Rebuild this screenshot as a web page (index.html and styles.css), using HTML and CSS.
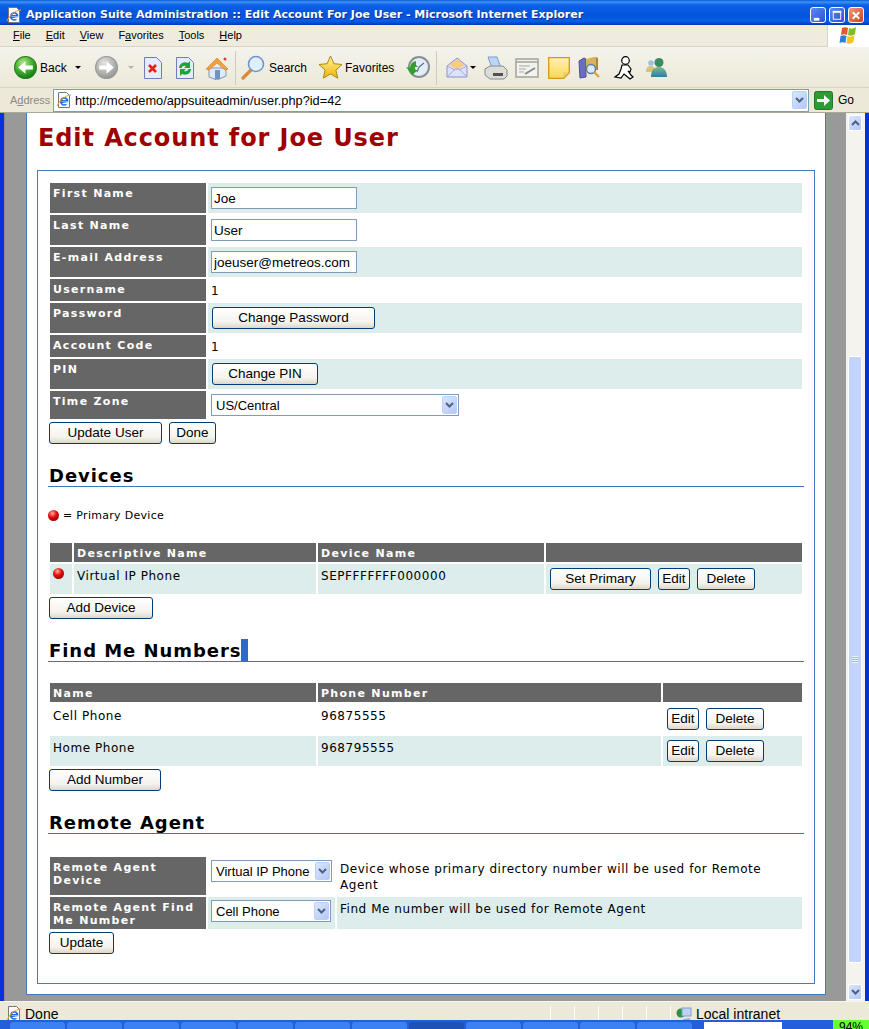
FILE: index.html
```html
<!DOCTYPE html>
<html lang="en">
<head>
  <meta charset="UTF-8">
  <meta name="viewport" content="width=device-width, initial-scale=1.0">
  <title>Application Suite Administration :: Edit Account For Joe User</title>
  <link rel="stylesheet" href="styles.css">
</head>
<body>
  <svg class="defs" aria-hidden="true">
    <defs>
      <radialGradient id="greenBall" cx="40%" cy="30%" r="75%"><stop offset="0" stop-color="#b5ea8c"/><stop offset=".55" stop-color="#3fae2a"/><stop offset="1" stop-color="#0d6f14"/></radialGradient>
      <radialGradient id="greyBall" cx="40%" cy="30%" r="75%"><stop offset="0" stop-color="#e4e4e2"/><stop offset="1" stop-color="#8f908e"/></radialGradient>
      <linearGradient id="star" x1="0" y1="0" x2="0" y2="1"><stop offset="0" stop-color="#fff6a0"/><stop offset="1" stop-color="#f2b300"/></linearGradient>
      <linearGradient id="note" x1="0" y1="0" x2="0" y2="1"><stop offset="0" stop-color="#fff2b0"/><stop offset="1" stop-color="#fbd658"/></linearGradient>
      <linearGradient id="msn" x1="0" y1="0" x2="0" y2="1"><stop offset="0" stop-color="#7fb98f"/><stop offset="1" stop-color="#2c7fa0"/></linearGradient>
      <symbol id="ieIcon" viewBox="0 0 16 16">
        <path d="M2.500.5h8l3 3v12h-11z" fill="#fff" stroke="#777"/>
        <path d="M4 9.500h8.500a4.300 4.300 0 1 0-1.300 3l-2-.6a2.300 2.300 0 0 1-3.100-.9h6.400M6.200 8a2.300 2.300 0 0 1 4.100 0z" fill="#1a6fdc" fill-rule="evenodd"/>
        <path d="M1 14C4 8 9 3.500 15 3" fill="none" stroke="#f0a020"/>
      </symbol>
      <symbol id="arrowDown" viewBox="0 0 9 6"><path d="M1 1l3.500 3.500L8 1" fill="none" stroke="#4d6185" stroke-width="2"/></symbol>
    </defs>
  </svg>

  <div class="window">
    <header class="titlebar">
      <svg class="ie-icon" width="16" height="16"><use href="#ieIcon"/></svg>
      <span class="titlebar-text">Application Suite Administration :: Edit Account For Joe User - Microsoft Internet Explorer</span>
      <div class="window-buttons">
        <span class="win-btn"><svg viewBox="0 0 15 15" width="15" height="15"><rect x="3" y="10" width="6" height="3" fill="#fff"/></svg></span>
        <span class="win-btn"><svg viewBox="0 0 15 15" width="15" height="15"><rect x="3.500" y="3.500" width="8" height="8" fill="none" stroke="#fff"/><rect x="3" y="2.500" width="9" height="2" fill="#fff"/></svg></span>
        <span class="win-btn win-close"><svg viewBox="0 0 15 15" width="15" height="15"><path d="M4 4l7 7M11 4l-7 7" stroke="#fff" stroke-width="2"/></svg></span>
      </div>
    </header>

    <nav class="menubar">
      <span class="menu-item"><u>F</u>ile</span>
      <span class="menu-item"><u>E</u>dit</span>
      <span class="menu-item"><u>V</u>iew</span>
      <span class="menu-item">F<u>a</u>vorites</span>
      <span class="menu-item"><u>T</u>ools</span>
      <span class="menu-item"><u>H</u>elp</span>
      <div class="flag">
        <svg viewBox="0 0 22 19" width="22" height="19"><path d="M4 2c2-1 4-1 6 0l-1 7c-2-1-4-1-6 0z" fill="#e8562a"/><path d="M11 2c2 1 4 1 7-1l-1 7c-3 2-5 2-7 1z" fill="#7fba2c"/><path d="M2.500 10c2-1 4-1 6 0l-1 7c-2-1-4-1-6 0z" fill="#2d7fd6"/><path d="M9.500 10c2 1 4 1 7-1l-1 7c-3 2-5 2-7 1z" fill="#f7c21c"/></svg>
      </div>
    </nav>

    <div class="toolbar">
      <svg class="tool tool-back" viewBox="0 0 22 22" width="23" height="23"><circle cx="11" cy="11" r="10.500" fill="url(#greenBall)" stroke="#2c7f22"/><path d="M18 9h-7V5l-7 6 7 6v-4h7z" fill="#fff"/></svg>
      <span class="tool-label back-label">Back</span>
      <span class="drop-arrow back-arrow"></span>
      <svg class="tool tool-forward" viewBox="0 0 22 22" width="23" height="23"><circle cx="11" cy="11" r="10.500" fill="url(#greyBall)" stroke="#999"/><path d="M4 9h7V5l7 6-7 6v-4H4z" fill="#fff"/></svg>
      <span class="drop-arrow drop-arrow-off forward-arrow"></span>
      <svg class="tool tool-stop" viewBox="0 0 20 24" width="20" height="24"><path d="M1.500 1.500h12l5 5v16h-17z" fill="#e6ecfb" stroke="#6d7fb8"/><path d="M6 9l7 7M13 9l-7 7" stroke="#e8200c" stroke-width="2.600"/></svg>
      <svg class="tool tool-refresh" viewBox="0 0 20 24" width="20" height="24"><path d="M1.500 1.500h12l5 5v16h-17z" fill="#e6ecfb" stroke="#6d7fb8"/><path d="M4 12a6 6 0 0 1 9-5l2-2v7h-6l2-2a3.500 3.500 0 0 0-4.500 2z" fill="#1fa52c"/><path d="M16 13a6 6 0 0 1-9 5l-2 2v-7h6l-2 2a3.500 3.500 0 0 0 4.500-2z" fill="#1fa52c"/></svg>
      <svg class="tool tool-home" viewBox="0 0 24 24" width="24" height="24"><path d="M4 12v9l8 3 9-4v-8z" fill="#dfe9f8" stroke="#7f95b8"/><path d="M1 13L12 2l11 11-3 1-8-7-8 7z" fill="#f2a040" stroke="#c87a20" stroke-width=".6"/><rect x="10" y="14" width="5" height="9" fill="#6f93c9"/><circle cx="20" cy="3" r="1.500" fill="#d8402a"/></svg>
      <span class="tool-sep sep-one"></span>
      <svg class="tool tool-search" viewBox="0 0 25 25" width="25" height="25"><path d="M10 15L2 23" stroke="#d88a3c" stroke-width="3.200" stroke-linecap="round"/><circle cx="15" cy="9" r="7.500" fill="#dff0fc" stroke="#6f97cc" stroke-width="1.600"/></svg>
      <span class="tool-label search-label">Search</span>
      <svg class="tool tool-star" viewBox="0 0 25 25" width="25" height="25"><path d="M12.500 1l3.400 7.700 8.100.8-6.100 5.500 1.800 8.200-7.200-4.300-7.200 4.300 1.800-8.200L1 9.500l8.100-.8z" fill="url(#star)" stroke="#a98a1a"/></svg>
      <span class="tool-label favorites-label">Favorites</span>
      <svg class="tool tool-history" viewBox="0 0 25 25" width="25" height="25"><circle cx="14" cy="12" r="10" fill="#e3edf5" stroke="#8a8f96" stroke-width="2"/><path d="M14 12l5-4M14 12l-2 5" stroke="#5a6f90" stroke-width="1.200"/><path d="M1 12l4 1a7 7 0 0 1 6-7v4l2 2h-3v2l1 1h2l-6 5z" fill="#32a02c"/></svg>
      <span class="tool-sep sep-two"></span>
      <svg class="tool tool-mail" viewBox="0 0 22 24" width="22" height="24"><path d="M1 10L11 2l10 8v11H1z" fill="#dbe2fb" stroke="#8a8fd0"/><path d="M3 9l8-6 8 6-8 5z" fill="#f6cc84"/><path d="M1 21l8-8h4l8 8M1 10l8 4M21 10l-8 4" fill="none" stroke="#a3a9e2"/></svg>
      <span class="drop-arrow mail-arrow"></span>
      <svg class="tool tool-print" viewBox="0 0 24 24" width="24" height="24"><path d="M4 1h9l4 11H8z" fill="#bcd6fa" stroke="#7f9cc8"/><path d="M1 13l5-3h13l4 4v6l-3 3H6l-5-4z" fill="#dcdcd8" stroke="#8a8a88"/><rect x="9" y="17" width="10" height="3" fill="#50524e"/></svg>
      <svg class="tool tool-edit" viewBox="0 0 24 22" width="24" height="22"><rect x="1" y="2" width="22" height="18" fill="#f2f2ee" stroke="#a3a39d" stroke-width="1.500"/><path d="M1 5h22" stroke="#a3a39d" stroke-width="1.500"/><path d="M4 9h11M4 12h7M4 15h5" stroke="#a8a8a4"/><path d="M10 17l10-6" stroke="#8a8a84" stroke-width="2"/></svg>
      <svg class="tool tool-note" viewBox="0 0 22 22" width="22" height="22"><path d="M.7.7h20.600v15l-5.600 5.600H.7z" fill="url(#note)" stroke="#d49a10" stroke-width="1.300"/><path d="M21 15.500h-5.500V21z" fill="#e8c868"/></svg>
      <svg class="tool tool-research" viewBox="0 0 24 24" width="24" height="24"><path d="M1 5l5-3 2 1v18l-6 1z" fill="#6a6fc0" stroke="#4a4f98"/><path d="M8 3l8-2h2v16H8z" fill="#d8b264"/><path d="M18 1l2 1v12h-2z" fill="#a8863c"/><circle cx="13" cy="13" r="4.500" fill="#d9ecfa" stroke="#5f7fa0" stroke-width="1.400"/><path d="M16 16l5 5" stroke="#d8a040" stroke-width="2.200"/></svg>
      <svg class="tool tool-aim" viewBox="0 0 21 24" width="21" height="24"><circle cx="12.500" cy="4.500" r="3.800" fill="#fff" stroke="#000" stroke-width="1.200"/><path d="M9 9h6l3 4-1 3-2-1 3 4 2 2-3 2-6-5-3 4-6-1 4-3 2-5z" fill="#fff" stroke="#000" stroke-width="1.200"/></svg>
      <svg class="tool tool-msn" viewBox="0 0 23 22" width="23" height="22"><circle cx="6" cy="6" r="2.800" fill="#9fc0e0"/><path d="M1 15c0-5 2-6 5-6s4 2 4 6z" fill="#d8c27c"/><circle cx="14" cy="5.500" r="4.500" fill="#3d8a5e"/><path d="M6 20c0-8 4-10 8-10s8 3 8 10z" fill="url(#msn)"/></svg>
    </div>

    <div class="addressbar">
      <span class="address-label">A<u>d</u>dress</span>
      <div class="address-box">
        <svg class="address-icon" width="16" height="16"><use href="#ieIcon"/></svg>
        <span class="address-url">http://mcedemo/appsuiteadmin/user.php?id=42</span>
        <span class="combo-arrow address-arrow"><svg width="9" height="6"><use href="#arrowDown"/></svg></span>
      </div>
      <svg class="go-icon" viewBox="0 0 19 19" width="19" height="19"><rect x=".5" y=".5" width="18" height="18" rx="2" fill="#2d9a34" stroke="#1e7a28"/><path d="M3 8h7V4l6 5.500-6 5.500v-4H3z" fill="#fff"/></svg>
      <span class="go-label">Go</span>
    </div>

    <div class="main">
      <main class="page">
        <h1 class="page-title">Edit Account for Joe User</h1>
        <div class="box">
          <table class="grid">
            <colgroup><col class="col-label"><col></colgroup>
            <tr class="row-tall"><th>First Name</th><td class="shade control"><input class="text-input" type="text" value="Joe"></td></tr>
            <tr class="row-tall"><th>Last Name</th><td class="control"><input class="text-input" type="text" value="User"></td></tr>
            <tr class="row-tall"><th>E-mail Address</th><td class="shade control"><input class="text-input" type="text" value="joeuser@metreos.com"></td></tr>
            <tr class="row-short"><th>Username</th><td>1</td></tr>
            <tr class="row-tall"><th>Password</th><td class="shade control"><button class="btn btn-inset w-163">Change Password</button></td></tr>
            <tr class="row-short"><th>Account Code</th><td>1</td></tr>
            <tr class="row-tall"><th>PIN</th><td class="shade control"><button class="btn btn-inset w-106">Change PIN</button></td></tr>
            <tr class="row-zone"><th>Time Zone</th><td class="control"><div class="combo w-248"><span class="combo-text">US/Central</span><span class="combo-arrow"><svg width="9" height="6"><use href="#arrowDown"/></svg></span></div></td></tr>
          </table>
          <div class="actions">
            <button class="btn w-113">Update User</button>
            <button class="btn w-47">Done</button>
          </div>

          <h2 class="section-title"><span>Devices</span></h2>
          <p class="legend"><span class="ball"></span>= Primary Device</p>
          <table class="grid">
            <colgroup><col class="col-dot"><col class="col-name"><col class="col-device"><col></colgroup>
            <tr class="row-head"><th></th><th>Descriptive Name</th><th>Device Name</th><th></th></tr>
            <tr class="row-tall">
              <td class="shade"><span class="ball"></span></td>
              <td class="shade">Virtual IP Phone</td>
              <td class="shade">SEPFFFFFFF000000</td>
              <td class="shade control row-btns"><button class="btn w-101">Set Primary</button><button class="btn w-32">Edit</button><button class="btn w-58">Delete</button></td>
            </tr>
          </table>
          <div class="actions"><button class="btn w-104">Add Device</button></div>

          <h2 class="section-title"><span>Find Me Numbers</span><span class="caret"></span></h2>
          <table class="grid numbers">
            <colgroup><col class="col-num-name"><col class="col-num"><col></colgroup>
            <tr class="row-head"><th>Name</th><th>Phone Number</th><th></th></tr>
            <tr class="row-tall"><td>Cell Phone</td><td>96875555</td><td class="control row-btns"><button class="btn w-32">Edit</button><button class="btn w-58">Delete</button></td></tr>
            <tr class="row-tall"><td class="shade">Home Phone</td><td class="shade">968795555</td><td class="shade control row-btns"><button class="btn w-32">Edit</button><button class="btn w-58">Delete</button></td></tr>
          </table>
          <div class="actions"><button class="btn w-112">Add Number</button></div>

          <h2 class="section-title"><span>Remote Agent</span></h2>
          <table class="grid agent">
            <colgroup><col class="col-label"><col class="col-agent"><col></colgroup>
            <tr class="row-agent-one">
              <th>Remote Agent Device</th>
              <td class="control"><div class="combo w-121"><span class="combo-text">Virtual IP Phone</span><span class="combo-arrow"><svg width="9" height="6"><use href="#arrowDown"/></svg></span></div></td>
              <td>Device whose primary directory number will be used for Remote Agent</td>
            </tr>
            <tr class="row-agent-two">
              <th>Remote Agent Find Me Number</th>
              <td class="shade control"><div class="combo w-120"><span class="combo-text">Cell Phone</span><span class="combo-arrow"><svg width="9" height="6"><use href="#arrowDown"/></svg></span></div></td>
              <td class="shade">Find Me number will be used for Remote Agent</td>
            </tr>
          </table>
          <div class="actions"><button class="btn w-65">Update</button></div>
        </div>
      </main>
      <div class="gutter"></div>
      <aside class="scrollbar">
        <span class="scroll-btn"><svg viewBox="0 0 9 6" width="9" height="6"><path d="M1 5l3.500-3.500L8 5" fill="none" stroke="#4d6185" stroke-width="2"/></svg></span>
        <div class="scroll-thumb"><span class="grip"></span></div>
        <span class="scroll-btn scroll-down"><svg width="9" height="6"><use href="#arrowDown"/></svg></span>
      </aside>
    </div>

    <footer class="statusbar">
      <svg class="status-icon" width="16" height="16"><use href="#ieIcon"/></svg>
      <span class="status-text">Done</span>
      <span class="status-cell first-cell"></span>
      <span class="status-cell"></span>
      <span class="status-cell"></span>
      <span class="status-cell"></span>
      <span class="status-cell"></span>
      <span class="status-zone">
        <svg viewBox="0 0 16 16" width="16" height="16"><circle cx="5" cy="7" r="4.500" fill="#2f8f4a"/><rect x="6" y="2" width="9" height="8" fill="#bcd4f4" stroke="#7f9fd0"/><path d="M7 13l7-1v2H7z" fill="#a8a8c8"/></svg>
        <span>Local intranet</span>
      </span>
    </footer>

    <div class="taskbar">
      <span class="task"></span><span class="task"></span><span class="task"></span><span class="task"></span>
      <span class="task"></span><span class="task"></span><span class="task"></span><span class="task task-active"></span>
      <span class="task"></span><span class="task"></span><span class="task"></span><span class="task"></span>
      <span class="tray-box"></span>
      <span class="tray-meter">94%</span>
    </div>
  </div>
</body>
</html>
```

FILE: styles.css
```css
* {
  box-sizing: border-box;
}
html, body {
  margin: 0;
  height: 1029px;
  overflow: hidden;
}
.defs {
  position: absolute;
  width: 0;
  height: 0;
}
.window {
  display: flex;
  flex-direction: column;
  width: 869px;
  height: 1029px;
  font-family: "Liberation Sans", Arial, sans-serif;
  background-color: #ece9d8;
}

/* title bar */
.titlebar {
  display: flex;
  align-items: center;
  height: 25px;
  padding: 4px 5px 0 6px;
  background: linear-gradient(#0a5ad8 0, #3d93f7 2px, #0b5fe6 5px, #0453dd 16px, #0660e8 21px, #0338b8 25px);
}
.ie-icon {
  flex: none;
}
.titlebar-text {
  margin-left: 4px;
  color: #fff;
  font-family: "DejaVu Sans", Verdana, sans-serif;
  font-size: 11px;
  font-weight: bold;
  white-space: nowrap;
  text-shadow: 1px 1px 0 #0a2f8c;
}
.window-buttons {
  display: flex;
  gap: 3px;
  margin-left: auto;
}
.win-btn {
  display: flex;
  width: 16px;
  height: 16px;
  border: 1px solid #fff;
  border-radius: 3px;
  background: linear-gradient(135deg, #5f8cf0, #2452d0);
}
.win-close {
  background: linear-gradient(135deg, #ec9a7c, #d0401c);
}

/* menu */
.menubar {
  display: flex;
  align-items: center;
  height: 22px;
  padding: 0 0 2px 13px;
  font-size: 11px;
  color: #000;
  background-color: #efecdf;
  border-bottom: 1px solid #d8d4c0;
}
.menu-item {
  margin-right: 15px;
}
.flag {
  display: flex;
  justify-content: center;
  align-items: center;
  width: 42px;
  height: 22px;
  margin: 0 0 -2px auto;
  background-color: #fff;
  border-left: 1px solid #d8d4c0;
}

/* toolbar */
.toolbar {
  display: flex;
  align-items: center;
  height: 41px;
  padding: 1px 0 0 14px;
  font-size: 12px;
  background: linear-gradient(#f4f3ec, #ece9d8);
  border-bottom: 1px solid #d8d4c0;
}
.tool {
  flex: none;
}
.tool-label {
  white-space: nowrap;
}
.back-label { margin-left: 3px; width: 35px; }
.back-arrow { margin-right: 14px; }
.tool-forward { margin-right: 10px; }
.forward-arrow { margin-right: 9px; }
.tool-stop { margin-right: 12px; }
.tool-refresh { margin-right: 10px; }
.tool-home { margin-right: 6px; }
.sep-one { margin-right: 5px; }
.search-label { margin-left: 3px; width: 49px; }
.favorites-label { margin-left: 2px; width: 60px; }
.tool-history { margin-right: 6px; }
.sep-two { margin-right: 9px; }
.mail-arrow { margin: 0 8px 0 2px; }
.tool-print { margin-right: 7px; }
.tool-edit { margin-right: 9px; }
.tool-note { margin-right: 8px; }
.tool-research { margin-right: 11px; }
.tool-aim { margin-right: 11px; }
.drop-arrow {
  width: 0;
  height: 0;
  border-left: 3px solid transparent;
  border-right: 3px solid transparent;
  border-top: 3px solid #000;
}
.drop-arrow-off {
  border-top-color: #b5b4ac;
}
.tool-sep {
  width: 1px;
  height: 34px;
  background-color: #cfcbb8;
}

/* address bar */
.addressbar {
  display: flex;
  align-items: center;
  height: 25px;
  padding: 0 0 0 10px;
  font-size: 12px;
  border-bottom: 1px solid #aca899;
}
.address-label {
  width: 43px;
  color: #8a8a84;
  font-size: 11px;
}
.address-box {
  display: flex;
  align-items: center;
  width: 756px;
  height: 23px;
  padding: 0 1px 0 2px;
  background-color: #fff;
  border: 1px solid #7f9db9;
}
.address-url {
  margin-left: 3px;
  padding-top: 1px;
  font-size: 12.8px;
  white-space: nowrap;
}
.address-arrow {
  margin-left: auto;
}
.go-icon {
  margin-left: 5px;
}
.go-label {
  margin-left: 5px;
}

/* page frame */
.main {
  display: flex;
  height: 888px;
  background: linear-gradient(90deg, #8a8a80 1px, #999 1px);
  border-left: 4px solid #0831d9;
  border-right: 4px solid #0831d9;
  padding-left: 22px;
  overflow: hidden;
}
.page {
  flex: none;
  align-self: flex-start;
  width: 800px;
  background-color: #fff;
  border: 1px solid #4a78c0;
  border-top: none;
}
.gutter {
  width: 20px;
}
.page-title {
  height: 40px;
  margin: 0 0 17px;
  padding: 9px 0 0 11px;
  color: #a00000;
  font-family: "DejaVu Sans", Verdana, sans-serif;
  font-size: 24px;
  line-height: 32px;
  letter-spacing: 0.9px;
}
.box {
  width: 778px;
  margin: 0 0 10px 10px;
  padding: 10px 10px 29px;
  border: 1px solid #4a78c0;
}

/* tables */
.grid {
  width: 756px;
  table-layout: fixed;
  border-spacing: 2px;
  border-collapse: separate;
  font-family: "DejaVu Sans", Verdana, sans-serif;
  font-size: 12px;
  letter-spacing: 0.55px;
  color: #000;
}
.grid th {
  padding: 4px 3px 2px;
  background-color: #666;
  color: #fff;
  font-size: 11px;
  line-height: 13px;
  letter-spacing: 1.3px;
  text-align: left;
  vertical-align: top;
}
.grid td {
  padding: 4px 3px 2px;
  vertical-align: top;
  line-height: 16px;
}
.grid td.shade {
  background-color: #dcedec;
}
.grid .control {
  padding: 4px 3px 0;
}
.col-label { width: 156px; }
.col-dot { width: 22px; }
.col-name { width: 242px; }
.col-device { width: 226px; }
.col-num-name { width: 266px; }
.col-num { width: 343px; }
.col-agent { width: 127px; }
.row-tall > * { height: 30px; }
.row-short > * { height: 22px; }
.row-zone > * { height: 28px; }
.row-head > * { height: 19px; }
.row-agent-one > * { height: 38px; }
.row-agent-two > * { height: 32px; }
.numbers {
  margin-top: 19px;
}
.agent {
  margin-top: 21px;
}

/* controls */
.text-input {
  display: block;
  width: 146px;
  height: 22px;
  padding: 0 2px;
  border: 1px solid #7f9db9;
  background-color: #fff;
  font-family: "Liberation Sans", Arial, sans-serif;
  font-size: 13.5px;
  color: #000;
}
.btn {
  height: 22px;
  padding: 0 0 1px;
  border: 1px solid #003c74;
  border-radius: 3px;
  background: linear-gradient(#fff, #f4f3ee 70%, #dcd8c8);
  font-family: "Liberation Sans", Arial, sans-serif;
  font-size: 13.5px;
  line-height: 18px;
  letter-spacing: 0;
  color: #000;
}
.btn-inset { display: block; margin-left: 1px; }
.w-32 { width: 32px; }
.w-47 { width: 47px; }
.w-58 { width: 58px; }
.w-65 { width: 65px; }
.w-101 { width: 101px; }
.w-104 { width: 104px; }
.w-106 { width: 106px; }
.w-112 { width: 112px; }
.w-113 { width: 113px; }
.w-163 { width: 163px; }
.w-120 { width: 120px; }
.w-121 { width: 121px; }
.w-248 { width: 248px; }
.actions {
  display: flex;
  gap: 7px;
  margin: 1px 0 0 1px;
}
.grid .row-btns {
  padding: 4px 0 0 4px;
  white-space: nowrap;
}
.row-btns .btn {
  margin-right: 7px;
}
.combo {
  display: flex;
  align-items: center;
  height: 22px;
  margin-top: -1px;
  padding: 1px;
  background-color: #fff;
  border: 1px solid #7f9db9;
  font-family: "Liberation Sans", Arial, sans-serif;
  font-size: 13px;
  letter-spacing: 0;
}
.combo-text {
  padding: 1px 0 0 3px;
  white-space: nowrap;
}
.combo-arrow {
  display: flex;
  align-items: center;
  justify-content: center;
  flex: none;
  width: 15px;
  height: 18px;
  margin-left: auto;
  border: 1px solid #bcd0f6;
  border-radius: 2px;
  background: linear-gradient(135deg, #dbe6fd, #b4c8f8);
}

/* sections */
.section-title {
  display: flex;
  align-items: flex-end;
  height: 26px;
  margin: 17px 0 0;
  padding-left: 1px;
  border-bottom: 1px solid #3f74c2;
  font-family: "DejaVu Sans", Verdana, sans-serif;
  font-size: 18px;
  line-height: 20px;
  letter-spacing: 0.95px;
  color: #000;
}
.caret {
  width: 7px;
  height: 22px;
  background-color: #316ac5;
}
.legend {
  display: flex;
  align-items: center;
  gap: 4px;
  height: 16px;
  margin: 20px 0 18px;
  font-family: "DejaVu Sans", Verdana, sans-serif;
  font-size: 11px;
  letter-spacing: 0.3px;
}
.ball {
  display: block;
  width: 11px;
  height: 11px;
  border-radius: 50%;
  background: radial-gradient(circle at 40% 30%, #ffb0a0, #e80d0d 40%, #8a0000 85%, #500);
}

/* scrollbar */
.scrollbar {
  display: flex;
  flex-direction: column;
  width: 19px;
  padding: 2px 3px 1px 2px;
  background-color: #f4f3ee;
}
.scroll-btn {
  display: flex;
  align-items: center;
  justify-content: center;
  flex: none;
  width: 14px;
  height: 16px;
  border: 1px solid #fff;
  border-radius: 2px;
  background: linear-gradient(135deg, #dbe6fd, #b4c8f8);
}
.scroll-thumb {
  display: flex;
  align-items: center;
  justify-content: center;
  flex: none;
  height: 607px;
  margin-top: 225px;
  border: 1px solid #fff;
  border-radius: 2px;
  background-color: #c2d3fc;
}
.grip {
  width: 6px;
  height: 7px;
  background: repeating-linear-gradient(#eef3ff 0 1px, #9fb6ea 1px 2px);
}
.scroll-down {
  margin-top: auto;
}

/* status bar */
.statusbar {
  display: flex;
  align-items: center;
  height: 19px;
  padding: 6px 0 0 6px;
  font-size: 14px;
  border-top: 1px solid #f8f6ee;
  background-color: #ece9d8;
  overflow: hidden;
}
.status-text {
  width: 525px;
  margin-left: 3px;
}
.status-cell {
  width: 24px;
  height: 17px;
  border-left: 1px solid #fff;
}
.status-zone {
  display: flex;
  align-items: center;
  gap: 4px;
  height: 17px;
  padding-left: 5px;
  border-left: 1px solid #fff;
  white-space: nowrap;
}

/* taskbar */
.taskbar {
  display: flex;
  align-items: flex-end;
  gap: 2px;
  height: 9px;
  padding-left: 10px;
  background-color: #245edb;
  overflow: hidden;
}
.task {
  width: 55px;
  height: 7px;
  border-radius: 3px 3px 0 0;
  background-color: #3c81f3;
}
.task-active {
  background-color: #1e52b7;
}
.tray-box {
  width: 78px;
  height: 7px;
  margin-left: 10px;
  background-color: #fff;
}
.tray-meter {
  flex: 1;
  height: 9px;
  margin-left: 49px;
  background-color: #66ff33;
  color: #000;
  font-size: 12px;
  line-height: 14px;
  text-align: center;
}
```
